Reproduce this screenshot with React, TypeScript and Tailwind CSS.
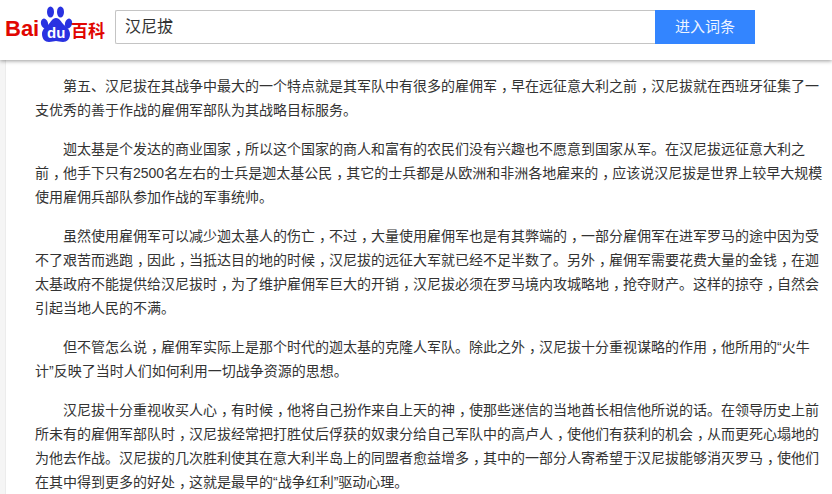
import { Fragment } from "react";

const paragraphs = [
  "第五、汉尼拔在其战争中最大的一个特点就是其军队中有很多的雇佣军,早在远征意大利之前,汉尼拔就在西班牙征集了一支优秀的善于作战的雇佣军部队为其战略目标服务。",
  "迦太基是个发达的商业国家,所以这个国家的商人和富有的农民们没有兴趣也不愿意到国家从军。在汉尼拔远征意大利之前,他手下只有2500名左右的士兵是迦太基公民,其它的士兵都是从欧洲和非洲各地雇来的,应该说汉尼拔是世界上较早大规模使用雇佣兵部队参加作战的军事统帅。",
  "虽然使用雇佣军可以减少迦太基人的伤亡,不过,大量使用雇佣军也是有其弊端的,一部分雇佣军在进军罗马的途中因为受不了艰苦而逃跑,因此,当抵达目的地的时候,汉尼拔的远征大军就已经不足半数了。另外,雇佣军需要花费大量的金钱,在迦太基政府不能提供给汉尼拔时,为了维护雇佣军巨大的开销,汉尼拔必须在罗马境内攻城略地,抢夺财产。这样的掠夺,自然会引起当地人民的不满。",
  "但不管怎么说,雇佣军实际上是那个时代的迦太基的克隆人军队。除此之外,汉尼拔十分重视谋略的作用,他所用的“火牛计”反映了当时人们如何利用一切战争资源的思想。",
  "汉尼拔十分重视收买人心,有时候,他将自己扮作来自上天的神,使那些迷信的当地酋长相信他所说的话。在领导历史上前所未有的雇佣军部队时,汉尼拔经常把打胜仗后俘获的奴隶分给自己军队中的高卢人,使他们有获利的机会,从而更死心塌地的为他去作战。汉尼拔的几次胜利使其在意大利半岛上的同盟者愈益增多,其中的一部分人寄希望于汉尼拔能够消灭罗马,使他们在其中得到更多的好处,这就是最早的“战争红利”驱动心理。",
];

const COMMA = "\uff0c";

function Para({ text }: { text: string }) {
  const parts = text.split(/[,\uff0c]/);
  return (
    <p className="indent-[28px] mb-[15px]">
      {parts.map((s, i) => (
        <Fragment key={i}>
          {s}
          {i < parts.length - 1 && <span className="relative left-[4px]">{COMMA}</span>}
        </Fragment>
      ))}
    </p>
  );
}

function Logo() {
  return (
    <div className="w-[106px] h-[44px] shrink-0 relative font-['Liberation_Sans',sans-serif] text-[#e10601]">
      <span className="absolute left-[5px] top-[17px] text-[22px] font-bold leading-[24px]">Bai</span>
      <svg viewBox="40 6 34 36" className="w-[34px] h-[36px] absolute left-[40px] top-[6px]" fill="#2932e1">
        <ellipse cx="44.5" cy="23.5" rx="3.5" ry="5" transform="rotate(-15 44.5 23.5)" />
        <ellipse cx="50.5" cy="12" rx="3.5" ry="5.5" />
        <ellipse cx="60.5" cy="12" rx="3.5" ry="5.5" />
        <ellipse cx="68.5" cy="23.5" rx="3.5" ry="5" transform="rotate(15 68.5 23.5)" />
        <path d="M56 18c-4 0-5 4-8 7-3 2-6 5-6 9 0 5 3 8 7 8 3 0 5-1 7-1s4 1 7 1c4 0 7-3 7-8 0-4-3-7-6-9-3-3-4-7-8-7z" />
      </svg>
      <span className="absolute left-[47px] top-[25px] text-[15px] font-bold leading-[15px] text-white">du</span>
      <span className="absolute left-[71px] top-[18px] text-[17px] font-bold leading-[24px] font-['Noto_Sans_CJK_SC',sans-serif] whitespace-nowrap">百科</span>
    </div>
  );
}

export default function App() {
  return (
    <div className="w-[832px] h-[494px] overflow-hidden bg-white flex flex-col font-['Liberation_Sans','Noto_Sans_CJK_SC',sans-serif]">
      <header className="h-[60px] shrink-0 flex items-start bg-white shadow-[0_1px_4px_rgba(0,0,0,0.4)] relative z-10">
        <Logo />
        <div className="mt-[10px] ml-[9px] w-[540px] h-[34px] border border-[#c4c4c4] border-r-0 rounded-l-[2px] bg-white flex items-center pl-[9px] pb-[1px] text-[16px] text-[#333]">
          汉尼拔
        </div>
        <div className="mt-[10px] w-[100px] h-[34px] bg-[#3385ff] text-[#eef4ff] text-[15px] flex items-center justify-center">
          进入词条
        </div>
      </header>
      <div className="flex-1 flex min-h-0">
        <div className="w-[6px] shrink-0 bg-[#f5f5f5] border-r border-[#ececec]" />
        <main className="flex-1 pl-[29px] pr-[6px] pt-[14px] text-[14px] leading-[24px] text-[#333]">
          {paragraphs.map((p) => (
            <Para key={p} text={p} />
          ))}
        </main>
      </div>
    </div>
  );
}
